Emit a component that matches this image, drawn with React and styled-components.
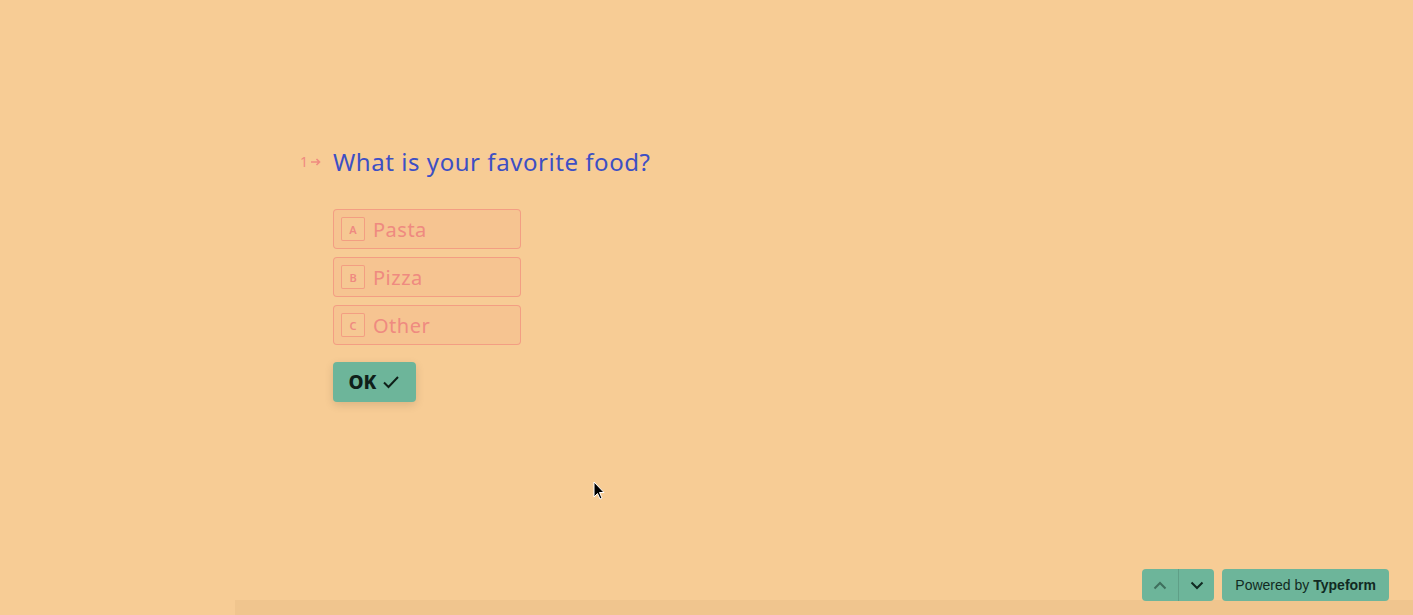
import React from 'react';
import styled, { createGlobalStyle } from 'styled-components';

const GlobalStyle = createGlobalStyle`
  html, body {
    margin: 0;
    padding: 0;
    height: 100%;
  }
  body {
    background-color: #f7cc95;
    font-family: 'Noto Sans', 'Liberation Sans', sans-serif;
    overflow: hidden;
  }
  #root {
    height: 100%;
  }
`;

const Page = styled.div`
  width: 100%;
  height: 615px;
  display: flex;
  flex-direction: column;
  background:
    linear-gradient(#f0c58e, #f0c58e) no-repeat 235px 600px / 100% 15px,
    #f7cc95;
`;

const Main = styled.div`
  flex: 1;
  padding: 146px 0 0 300px;
`;

const Question = styled.div`
  display: flex;
  align-items: flex-start;
`;

const Counter = styled.div`
  width: 33px;
  display: flex;
  align-items: center;
  gap: 2px;
  padding-top: 6px;
  font-size: 14px;
  color: #ef8a80;
`;

const Title = styled.h1`
  margin: 0;
  font-size: 24px;
  font-weight: 400;
  line-height: 32px;
  color: #3d4fc4;
  letter-spacing: 0.55px;
`;

const Choices = styled.div`
  margin: 31px 0 0 33px;
  display: flex;
  flex-direction: column;
  gap: 8px;
`;

const Choice = styled.div`
  width: 188px;
  height: 40px;
  box-sizing: border-box;
  display: flex;
  align-items: center;
  gap: 8px;
  padding: 0 7px;
  border: 1px solid rgba(240, 128, 120, 0.55);
  border-radius: 4px;
  background-color: rgba(240, 140, 120, 0.12);
`;

const Key = styled.span`
  width: 24px;
  height: 24px;
  box-sizing: border-box;
  display: flex;
  align-items: center;
  justify-content: center;
  border: 1px solid rgba(240, 128, 120, 0.6);
  border-radius: 2px;
  background-color: rgba(247, 204, 149, 0.6);
  font-size: 11px;
  font-weight: 600;
  color: #ef8a80;
`;

const Label = styled.span`
  font-size: 20px;
  color: #ef8a80;
  letter-spacing: 0.5px;
`;

const OkButton = styled.button`
  margin: 17px 0 0 33px;
  width: 83px;
  height: 40px;
  display: flex;
  align-items: center;
  justify-content: center;
  gap: 6px;
  border: none;
  border-radius: 4px;
  background-color: #6db59a;
  box-shadow: 0 3px 10px rgba(0, 0, 0, 0.12);
  font-family: inherit;
  font-size: 19px;
  font-weight: 800;
  color: #0f2019;
  cursor: pointer;
`;

const Footer = styled.div`
  display: flex;
  justify-content: flex-end;
  align-items: center;
  gap: 8px;
  padding: 0 24px 14px 0;
`;

const NavGroup = styled.div`
  display: flex;
  height: 32px;
  border-radius: 4px;
  overflow: hidden;
  background-color: #6db59a;
`;

const NavButton = styled.button`
  width: 36px;
  height: 32px;
  display: flex;
  align-items: center;
  justify-content: center;
  border: none;
  padding: 0;
  background: transparent;
  border-left: ${(p) => (p.$divider ? '1px solid rgba(0,0,0,0.12)' : 'none')};
  color: ${(p) => (p.$dim ? 'rgba(17,42,34,0.5)' : '#112a22')};
`;

const Powered = styled.div`
  height: 32px;
  padding: 0 13px;
  display: flex;
  align-items: center;
  border-radius: 4px;
  background-color: #6db59a;
  font-family: 'Liberation Sans', Arial, sans-serif;
  font-size: 14px;
  color: #112a22;
  b {
    margin-left: 4px;
  }
`;

const Cursor = styled.svg`
  position: absolute;
  left: 593px;
  top: 481px;
`;

const Arrow = () => (
  <svg width="12" height="10" viewBox="0 0 12 10">
    <path d="M1 5h8.5M6.5 2 9.5 5 6.5 8" stroke="#ef8a80" strokeWidth="1.6" fill="none" />
  </svg>
);

const choices = [
  { key: 'A', label: 'Pasta' },
  { key: 'B', label: 'Pizza' },
  { key: 'C', label: 'Other' },
];

const App = () => {
  return (
    <Page>
      <GlobalStyle />
      <Main>
        <Question>
          <Counter>
            1<Arrow />
          </Counter>
          <Title>What is your favorite food?</Title>
        </Question>
        <Choices>
          {choices.map((c) => (
            <Choice key={c.key}>
              <Key>{c.key}</Key>
              <Label>{c.label}</Label>
            </Choice>
          ))}
        </Choices>
        <OkButton>
          OK
          <svg width="18" height="14" viewBox="0 0 18 14">
            <path d="M2 7.5 6.5 12 16 2" stroke="#0f2019" strokeWidth="2" fill="none" />
          </svg>
        </OkButton>
      </Main>
      <Footer>
        <NavGroup>
          <NavButton $dim>
            <svg width="14" height="9" viewBox="0 0 14 9">
              <path d="M1.5 7.5 7 2l5.5 5.5" stroke="currentColor" strokeWidth="2" fill="none" />
            </svg>
          </NavButton>
          <NavButton $divider>
            <svg width="14" height="9" viewBox="0 0 14 9">
              <path d="M1.5 1.5 7 7l5.5-5.5" stroke="currentColor" strokeWidth="2" fill="none" />
            </svg>
          </NavButton>
        </NavGroup>
        <Powered>
          Powered by <b>Typeform</b>
        </Powered>
      </Footer>
      <Cursor width="12" height="19" viewBox="0 0 12 19">
        <path d="M1 1v15l3.5-3.5 2.5 5.5 2-1-2.5-5.5H11z" fill="#000" stroke="#fff" strokeWidth="1" />
      </Cursor>
    </Page>
  );
};

export default App;
